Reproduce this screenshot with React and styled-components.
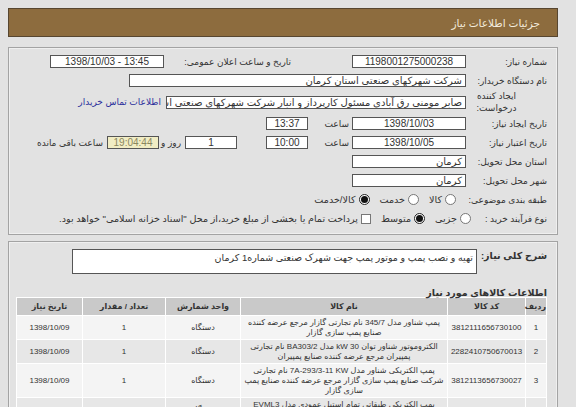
import React from 'react';
import styled, { createGlobalStyle } from 'styled-components';

/*
* Page level styles
* */
const GlobalStyle = createGlobalStyle`
    html, body {
        margin: 0;
        padding: 0;
        background: #e2e2e2;
    }
    body {
        padding: 8px;
        font-family: "Liberation Sans", "DejaVu Sans", sans-serif;
        font-size: 9px;
        color: #333;
    }
`;

const Page = styled('div')`
    width: 550px;
    direction: rtl;
`;

const Header = styled('div')`
    height: 27px;
    background: #8d6c3e;
    border: 1px solid #574630;
    color: #f3ebdc;
    display: flex;
    align-items: center;
    padding-right: 17px;
    font-size: 10.5px;
`;

const Panel = styled('div')`
    margin-top: ${p => p.top || 4}px;
    border: 1px solid #a3a3a3;
    box-shadow: inset 0 0 0 1px #efefef;
    padding: ${p => p.pad || '4px 10px 6px 10px'};
`;

/*
* Form rows
* */
const Row = styled('div')`
    display: flex;
    align-items: ${p => p.top ? 'flex-start' : 'center'};
    height: ${p => p.h || 19}px;
`;

const Label = styled('div')`
    width: ${p => p.w || 81}px;
    flex: none;
    text-align: ${p => p.align || 'right'};
    padding-right: ${p => p.pr || 0}px;
    padding-top: ${p => p.pt || 0}px;
    box-sizing: border-box;
    white-space: ${p => p.wrap ? 'normal' : 'nowrap'};
    line-height: 12px;
    font-weight: ${p => p.bold ? 700 : 400};
    font-size: ${p => p.bold ? '9.5px' : 'inherit'};
`;

const SubLabel = styled('div')`
    width: ${p => p.w}px;
    flex: none;
    margin-right: ${p => p.mr || 0}px;
    text-align: right;
    white-space: nowrap;
`;

const Field = styled('div')`
    width: ${p => p.w}px;
    height: ${p => p.h || 13}px;
    flex: none;
    margin-right: ${p => p.mr || 0}px;
    box-sizing: border-box;
    border: 1px solid #555;
    background: ${p => p.bg || '#fff'};
    color: ${p => p.color || '#333'};
    direction: ${p => p.ltr ? 'ltr' : 'rtl'};
    text-align: ${p => p.center ? 'center' : 'right'};
    font-size: 10px;
    line-height: 11px;
    padding: 0 3px;
    overflow: hidden;
    white-space: nowrap;
`;

const TallField = styled(Field)`
    height: 25px;
    padding: 2px 3px;
    font-size: 9.5px;
`;

const Link = styled('a')`
    margin-right: 5px;
    color: #2b2f9c;
    text-decoration: none;
    white-space: nowrap;
`;

const Options = styled('div')`
    display: flex;
    align-items: center;
    gap: 10px;
    margin-right: ${p => p.mr || 0}px;
    font-size: 9.6px;
    white-space: nowrap;
`;

const Option = styled('label')`
    display: flex;
    align-items: center;
    gap: 3px;
`;

const Radio = styled('span')`
    width: 11px;
    height: 11px;
    box-sizing: border-box;
    border-radius: 50%;
    border: 1px solid ${p => p.checked ? '#222' : '#777'};
    background: #fff;
    display: inline-flex;
    align-items: center;
    justify-content: center;
    &::after {
        content: '';
        width: 7px;
        height: 7px;
        border-radius: 50%;
        background: ${p => p.checked ? '#111' : 'transparent'};
    }
`;

const Check = styled('span')`
    width: 10px;
    height: 10px;
    box-sizing: border-box;
    border: 1px solid #777;
    background: #fff;
`;

/*
* Goods table
* */
const Heading = styled('div')`
    margin-top: 13px;
    line-height: 12px;
    font-size: 9.5px;
    font-weight: 700;
`;

const Table = styled('table')`
    width: 524px;
    margin-top: -2px;
    table-layout: fixed;
    border-collapse: separate;
    border-spacing: 1px;
    background: #fff;
    font-size: 8px;
    color: #333;
`;

const Th = styled('th')`
    height: 17px;
    padding: 0;
    background: #c9c9c9;
    font-weight: 700;
    text-align: center;
`;

const Td = styled('td')`
    padding: 1.5px 2px;
    line-height: 10px;
    text-align: center;
    background: ${p => p.odd ? '#f4f4f4' : '#e7e7e7'};
    white-space: nowrap;
    overflow: hidden;
`;

const items = [
	{ code: '3812111656730100', name: ['پمپ شناور مدل 345/7 نام تجارتی گازار مرجع عرضه کننده', 'صنایع پمپ سازی گازار'] },
	{ code: '2282410750670013', name: ['الکتروموتور شناور توان 30 kW مدل BA303/2 نام تجارتی', 'پمپیران مرجع عرضه کننده صنایع پمپیران'] },
	{ code: '3812113656730027', name: ['پمپ الکتریکی شناور مدل 7A-293/3-11 KW نام تجارتی', 'شرکت صنایع پمپ سازی گازار مرجع عرضه کننده صنایع پمپ', 'سازی گازار'] },
	{ code: '3812111773010000', name: ['پمپ الکتریکی طبقاتی تمام استیل عمودی مدل EVML3', '2655/2 نام تجارتی EBARA مرجع عرضه کننده'] },
];

export default function App() {
	return (
		<Page>
			<GlobalStyle />
			<Header>جزئیات اطلاعات نیاز</Header>

			<Panel top={10}>
				<Row>
					<Label>شماره نیاز:</Label>
					<Field w={114} center>1198001275000238</Field>
					<SubLabel w={125} mr={61}>تاریخ و ساعت اعلان عمومی:</SubLabel>
					<Field w={114} mr={2} center ltr>1398/10/03 - 13:45</Field>
				</Row>
				<Row>
					<Label>نام دستگاه خریدار:</Label>
					<Field w={337}>شرکت شهرکهای صنعتی استان کرمان</Field>
				</Row>
				<Row h={24}>
					<Label wrap align="center" pr={20}>ایجاد کننده درخواست:</Label>
					<Field w={300}>صابر مومنی رق آبادی مسئول کارپرداز و انبار شرکت شهرکهای صنعتی استان کرمان</Field>
					<Link href="#">اطلاعات تماس خریدار</Link>
				</Row>
				<Row>
					<Label>تاریخ ایجاد نیاز:</Label>
					<Field w={114} center>1398/10/03</Field>
					<SubLabel w={40} mr={3}>ساعت</SubLabel>
					<Field w={42} mr={1} center>13:37</Field>
				</Row>
				<Row>
					<Label>تاریخ اعتبار نیاز:</Label>
					<Field w={114} center>1398/10/05</Field>
					<SubLabel w={40} mr={3}>ساعت</SubLabel>
					<Field w={42} mr={1} center>10:00</Field>
					<Field w={52} mr={29} center>1</Field>
					<SubLabel w={22} mr={4}>روز و</SubLabel>
					<Field w={52} center bg="#f1edc4" color="#8a8760">19:04:44</Field>
					<SubLabel w={70} mr={4}>ساعت باقی مانده</SubLabel>
				</Row>
				<Row>
					<Label>استان محل تحویل:</Label>
					<Field w={114}>کرمان</Field>
				</Row>
				<Row>
					<Label>شهر محل تحویل:</Label>
					<Field w={114}>کرمان</Field>
				</Row>
				<Row>
					<Label>طبقه بندی موضوعی:</Label>
					<Options mr={10}>
						<Option><Radio />کالا</Option>
						<Option><Radio />خدمت</Option>
						<Option><Radio checked />کالا/خدمت</Option>
					</Options>
				</Row>
				<Row>
					<Label w={74}>نوع فرآیند خرید :</Label>
					<Options mr={2}>
						<Option><Radio />جزیی</Option>
						<Option><Radio checked />متوسط</Option>
						<Option><Check />پرداخت تمام یا بخشی از مبلغ خرید،از محل "اسناد خزانه اسلامی" خواهد بود.</Option>
					</Options>
				</Row>
			</Panel>

			<Panel top={6} pad="7px 10px 20px 10px">
				<Row h={25} top>
					<Label w={70} bold pt={1}>شرح کلی نیاز:</Label>
					<TallField w={405}>تهیه و نصب پمپ و موتور پمپ جهت شهرک صنعتی شماره1 کرمان</TallField>
				</Row>
				<Heading>اطلاعات کالاهای مورد نیاز</Heading>
				<Table>
					<colgroup>
						<col style={{ width: 20 }} />
						<col style={{ width: 77 }} />
						<col style={{ width: 206 }} />
						<col style={{ width: 74 }} />
						<col style={{ width: 82 }} />
						<col style={{ width: 65 }} />
					</colgroup>
					<thead>
						<tr>
							<Th>ردیف</Th>
							<Th>کد کالا</Th>
							<Th>نام کالا</Th>
							<Th>واحد شمارش</Th>
							<Th>تعداد / مقدار</Th>
							<Th>تاریخ نیاز</Th>
						</tr>
					</thead>
					<tbody>
						{items.map((item, i) => (
							<tr key={item.code}>
								<Td odd={i % 2 === 0}>{i + 1}</Td>
								<Td odd={i % 2 === 0}>{item.code}</Td>
								<Td odd={i % 2 === 0}>
									{item.name.map((line, j) => <div key={j}>{line}</div>)}
								</Td>
								<Td odd={i % 2 === 0}>دستگاه</Td>
								<Td odd={i % 2 === 0}>1</Td>
								<Td odd={i % 2 === 0}>1398/10/09</Td>
							</tr>
						))}
					</tbody>
				</Table>
			</Panel>
		</Page>
	);
}
